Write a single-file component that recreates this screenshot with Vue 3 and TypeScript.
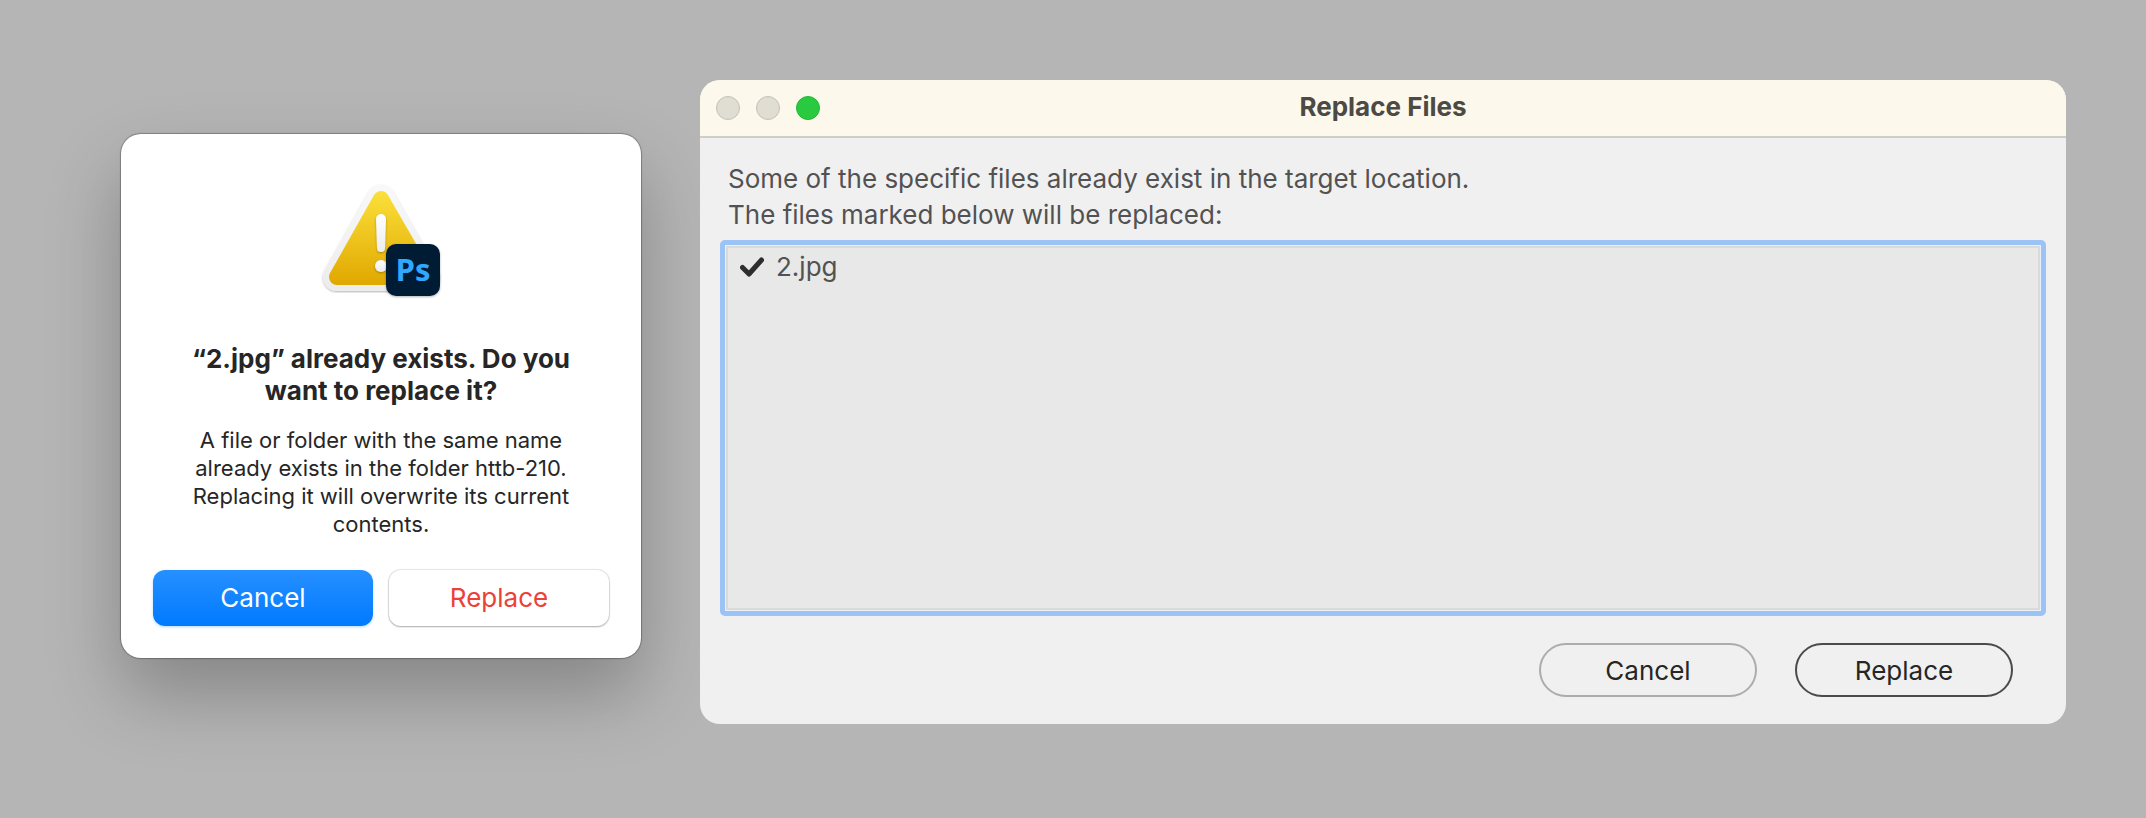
<script setup lang="ts">
import { ref } from 'vue'

interface FileEntry {
  id: string
  name: string
  marked: boolean
}

const files = ref<FileEntry[]>([{ id: 'file-2', name: '2.jpg', marked: true }])
</script>

<template>
  <main class="desktop">
    <section class="alert" role="alertdialog" aria-labelledby="alert-title" aria-describedby="alert-text">
      <svg class="alert-icon" viewBox="0 0 128 120" aria-hidden="true">
        <defs>
          <linearGradient id="yellow" gradientUnits="userSpaceOnUse" x1="0" y1="9" x2="0" y2="103">
            <stop offset="0" stop-color="#fbe03a" />
            <stop offset="1" stop-color="#e0a800" />
          </linearGradient>
          <linearGradient id="rim" gradientUnits="userSpaceOnUse" x1="0" y1="3" x2="0" y2="109">
            <stop offset="0" stop-color="#f9f9f9" />
            <stop offset="1" stop-color="#ececec" />
          </linearGradient>
          <linearGradient id="mark" x1="0" y1="0" x2="0" y2="1">
            <stop offset="0" stop-color="#ffffff" />
            <stop offset="1" stop-color="#ececec" />
          </linearGradient>
          <filter id="soft" x="-20%" y="-20%" width="140%" height="140%">
            <feDropShadow dx="0" dy="1" stdDeviation="1" flood-color="#000" flood-opacity="0.3" />
          </filter>
        </defs>
        <path d="M64 17 L109 95 H20 Z" fill="url(#rim)" stroke="url(#rim)" stroke-width="28" stroke-linejoin="round" filter="url(#soft)" />
        <path d="M64 17 L109 95 H20 Z" fill="url(#yellow)" stroke="url(#yellow)" stroke-width="16" stroke-linejoin="round" />
        <g fill="url(#mark)" filter="url(#soft)">
          <path d="M59 37 a5 5 0 0 1 10 0 L68 66 a4 4 0 0 1 -8 0 Z" />
          <circle cx="64" cy="84" r="6" />
        </g>
        <rect x="69" y="62" width="54" height="52" rx="10" fill="#001e36" filter="url(#soft)" />
        <text class="badge-text" x="96" y="99" text-anchor="middle">Ps</text>
      </svg>
      <h1 id="alert-title" class="alert-title">“2.jpg” already exists. Do you want to replace it?</h1>
      <p id="alert-text" class="alert-text">
        A file or folder with the same name already exists in the folder httb-210. Replacing it will overwrite its current contents.
      </p>
      <div class="alert-actions">
        <button type="button" class="alert-button primary">Cancel</button>
        <button type="button" class="alert-button danger">Replace</button>
      </div>
    </section>

    <section class="window" role="dialog" aria-labelledby="window-title">
      <header class="titlebar">
        <div class="lights">
          <button type="button" class="light" aria-label="Close" disabled></button>
          <button type="button" class="light" aria-label="Minimize" disabled></button>
          <button type="button" class="light zoom" aria-label="Zoom"></button>
        </div>
        <h2 id="window-title" class="window-title">Replace Files</h2>
      </header>
      <div class="content">
        <p class="message">
          Some of the specific files already exist in the target location.<br />
          The files marked below will be replaced:
        </p>
        <ul class="file-list">
          <li v-for="file in files" :key="file.id" class="file-row">
            <span class="tick">
              <input :id="file.id" v-model="file.marked" type="checkbox" class="tick-input" />
              <svg v-if="file.marked" class="tick-mark" viewBox="0 0 24 20" aria-hidden="true">
                <path d="M2.5 10.5 L9 17 L21.5 3" />
              </svg>
            </span>
            <label :for="file.id">{{ file.name }}</label>
          </li>
        </ul>
        <footer class="window-actions">
          <button type="button" class="pill">Cancel</button>
          <button type="button" class="pill strong">Replace</button>
        </footer>
      </div>
    </section>
  </main>
</template>

<style>
body {
  margin: 0;
  background: #b5b5b5;
}
</style>

<style scoped>
.desktop {
  display: flex;
  align-items: flex-start;
  gap: 59px;
  box-sizing: border-box;
  min-height: 100vh;
  padding: 80px 80px 80px 121px;
  background: #b5b5b5;
  font-family: Inter, "Liberation Sans", sans-serif;
}

h1,
h2,
p,
ul {
  margin: 0;
  padding: 0;
}

button {
  margin: 0;
  padding: 0;
  font-family: inherit;
  font-size: 26px;
}

.alert {
  display: flex;
  flex: 0 0 520px;
  flex-direction: column;
  align-items: center;
  box-sizing: border-box;
  margin-top: 54px;
  padding: 48px 32px 32px;
  border-radius: 20px;
  background: #fff;
  box-shadow:
    0 0 1px 1px rgba(0, 0, 0, 0.28),
    0 36px 72px rgba(0, 0, 0, 0.26);
  color: #262626;
  text-align: center;
}

.alert-icon {
  width: 128px;
  height: 120px;
}

.badge-text {
  fill: #31a8ff;
  font-family: "Open Sans", "Noto Sans", sans-serif;
  font-size: 31px;
  font-weight: 700;
}

.alert-title {
  width: 400px;
  margin-top: 41px;
  font-size: 26px;
  font-weight: 700;
  line-height: 32px;
}

.alert-text {
  width: 400px;
  margin-top: 19px;
  font-size: 22px;
  line-height: 28px;
}

.alert-actions {
  display: grid;
  grid-template-columns: 1fr 1fr;
  gap: 16px;
  align-self: stretch;
  margin-top: 32px;
}

.alert-button {
  height: 56px;
  padding-bottom: 2px;
  border: 0;
  border-radius: 12px;
}

.primary {
  background: linear-gradient(#2690ff, #007aff);
  box-shadow: 0 1px 3px rgba(0, 122, 255, 0.3);
  color: #fff;
}

.danger {
  background: #fff;
  box-shadow:
    0 0 1px 1px rgba(0, 0, 0, 0.1),
    0 1px 2px rgba(0, 0, 0, 0.26);
  color: #eb4137;
}

.window {
  flex: 1;
  min-width: 0;
  overflow: hidden;
  border-radius: 20px;
  background: #f0f0f0;
}

.titlebar {
  display: grid;
  grid-template-columns: 1fr auto 1fr;
  align-items: center;
  box-sizing: border-box;
  height: 58px;
  padding: 0 16px;
  border-bottom: 2px solid #cfcdc6;
  background: #fcf9ec;
}

.lights {
  display: flex;
  gap: 16px;
}

.light {
  box-sizing: border-box;
  width: 24px;
  height: 24px;
  border: 1px solid #c3c0b6;
  border-radius: 50%;
  background: #e0ddd2;
}

.zoom {
  border-color: #25b637;
  background: #29c940;
}

.window-title {
  padding-bottom: 2px;
  color: #4d4a43;
  font-size: 26px;
  font-weight: 700;
  line-height: 32px;
}

.content {
  padding: 23px 20px 27px;
}

.message {
  padding: 0 8px;
  color: #525252;
  font-size: 26px;
  line-height: 36px;
}

.file-list {
  box-sizing: border-box;
  min-height: 376px;
  margin-top: 7px;
  padding: 8px 12px;
  border: 5px solid #9bc3f5;
  border-radius: 5px;
  background: #e8e8e8;
  box-shadow:
    inset 0 0 0 1px #eceff3,
    inset 0 0 0 3px #d8dadb;
  list-style: none;
}

.file-row {
  display: flex;
  align-items: center;
  gap: 12px;
  padding-left: 3px;
  color: #525252;
  font-size: 26px;
  line-height: 28px;
}

.tick {
  display: grid;
  width: 24px;
  height: 20px;
}

.tick-input,
.tick-mark {
  grid-area: 1 / 1;
  width: 24px;
  height: 20px;
  margin: 0;
}

.tick-input {
  appearance: none;
}

.tick-mark {
  fill: none;
  stroke: #2e2e2e;
  stroke-linecap: round;
  stroke-linejoin: round;
  stroke-width: 5;
  pointer-events: none;
}

.window-actions {
  display: flex;
  justify-content: flex-end;
  gap: 38px;
  margin-top: 27px;
  padding-right: 33px;
}

.pill {
  width: 218px;
  height: 54px;
  border: 2px solid #acacac;
  border-radius: 27px;
  background: transparent;
  color: #262626;
}

.strong {
  border-color: #4a4a4a;
}
</style>
